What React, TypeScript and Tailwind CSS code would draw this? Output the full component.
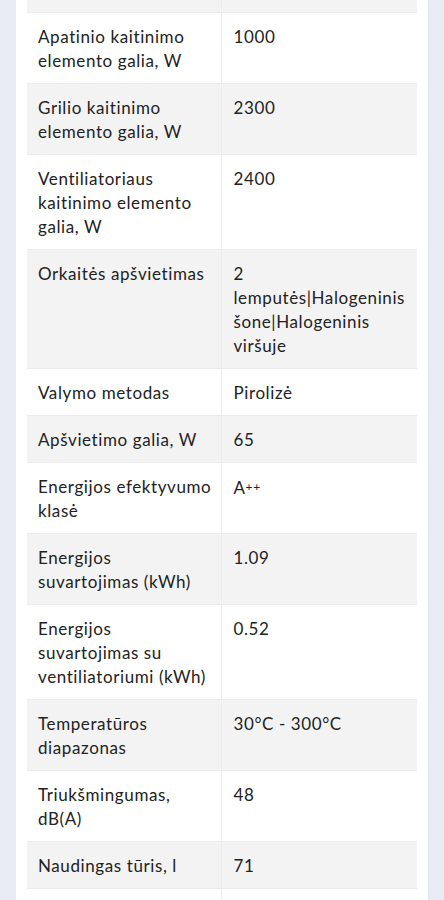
const rows: [string[], string[]][] = [
  [['Apatinio kaitinimo', 'elemento galia, W'], ['1000']],
  [['Grilio kaitinimo', 'elemento galia, W'], ['2300']],
  [['Ventiliatoriaus', 'kaitinimo elemento', 'galia, W'], ['2400']],
  [['Orkaitės apšvietimas'], ['2', 'lemputės|Halogeninis', 'šone|Halogeninis', 'viršuje']],
  [['Valymo metodas'], ['Pirolizė']],
  [['Apšvietimo galia, W'], ['65']],
  [['Energijos efektyvumo', 'klasė'], ['A++']],
  [['Energijos', 'suvartojimas (kWh)'], ['1.09']],
  [['Energijos', 'suvartojimas su', 'ventiliatoriumi (kWh)'], ['0.52']],
  [['Temperatūros', 'diapazonas'], ['30°C - 300°C']],
  [['Triukšmingumas,', 'dB(A)'], ['48']],
  [['Naudingas tūris, l'], ['71']],
];

function Lines({ lines }: { lines: string[] }) {
  return (
    <>
      {lines.map((l) => (
        <div key={l} className="whitespace-nowrap">
          {l === 'A++' ? (
            <>
              A<span className="text-[12px] align-[3px]">++</span>
            </>
          ) : (
            l
          )}
        </div>
      ))}
    </>
  );
}

export default function App() {
  return (
    <div
      className="h-[900px] overflow-hidden bg-[#e9ecf4] pl-4 pr-[15px]"
      style={{ fontFamily: 'Lato, "Noto Sans", sans-serif' }}
    >
      <div className="bg-white px-[11px] border-r border-[#dfe3ea] h-full">
        <table className="w-full border-collapse table-fixed text-[17px] leading-6 tracking-[0.6px] text-[#222]">
          <colgroup>
            <col className="w-[194px]" />
            <col />
          </colgroup>
          <tbody>
            <tr className="bg-[#f3f3f4] border-b border-[#ebebec]">
              <td className="h-[12px] border-r border-[#ececec]"></td>
              <td></td>
            </tr>
            {rows.map(([label, value], i) => (
              <tr
                key={label[0] + i}
                className={`border-b border-[#ebebec] ${i % 2 === 1 ? 'bg-[#f3f3f4]' : 'bg-white'}`}
              >
                <td className="align-top pl-[11px] pr-1 pt-3 pb-[10px] border-r border-[#ececec]">
                  <Lines lines={label} />
                </td>
                <td className="align-top pl-3 pr-1 pt-3 pb-[10px]">
                  <Lines lines={value} />
                </td>
              </tr>
            ))}
            <tr className="bg-white">
              <td className="h-[60px] border-r border-[#ececec]"></td>
              <td></td>
            </tr>
          </tbody>
        </table>
      </div>
    </div>
  );
}
